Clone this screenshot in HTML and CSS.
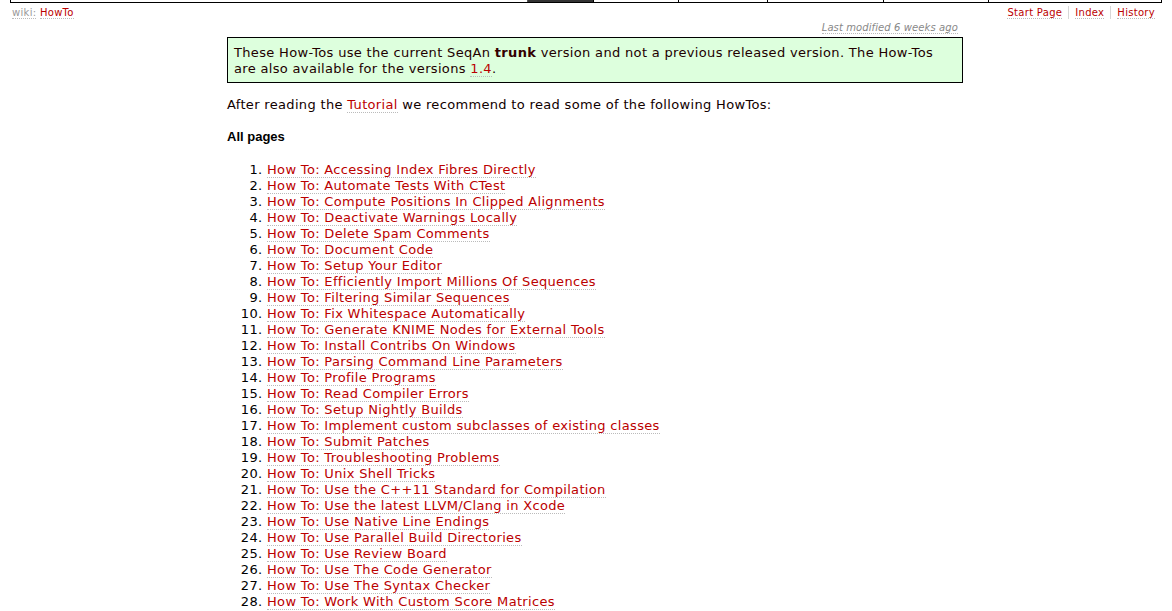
FILE: index.html
```html
<!DOCTYPE html>
<html>
<head>
<meta charset="utf-8">
<title>HowTo</title>
<link rel="stylesheet" href="styles.css">
</head>
<body>
<div class="mainnav">
  <span class="tab tab-first active"></span>
  <span class="tab tab-2"></span>
  <span class="tab tab-3"></span>
  <span class="tab tab-4"></span>
  <span class="tab tab-5"></span>
  <span class="tab tab-6"></span>
</div>
<div class="ctxtnav">
  <div class="path"><a class="first" href="#">wiki:</a> <a href="#">HowTo</a></div>
  <ul class="ctx-links">
    <li><a href="#">Start Page</a></li>
    <li><a href="#">Index</a></li>
    <li><a href="#">History</a></li>
  </ul>
</div>
<div class="content">
  <p class="lastmod"><a href="#">Last modified 6 weeks ago</a></p>
  <div class="notice">These How-Tos use the current SeqAn <b>trunk</b> version and not a previous released version. The How-Tos are also available for the versions <a href="#">1.4</a>.</div>
  <p class="intro">After reading the <a href="#">Tutorial</a> we recommend to read some of the following HowTos:</p>
  <h4 class="heading">All pages</h4>
  <ol class="pages">
    <li><a href="#">How To: Accessing Index Fibres Directly</a></li>
    <li><a href="#">How To: Automate Tests With CTest</a></li>
    <li><a href="#">How To: Compute Positions In Clipped Alignments</a></li>
    <li><a href="#">How To: Deactivate Warnings Locally</a></li>
    <li><a href="#">How To: Delete Spam Comments</a></li>
    <li><a href="#">How To: Document Code</a></li>
    <li><a href="#">How To: Setup Your Editor</a></li>
    <li><a href="#">How To: Efficiently Import Millions Of Sequences</a></li>
    <li><a href="#">How To: Filtering Similar Sequences</a></li>
    <li><a href="#">How To: Fix Whitespace Automatically</a></li>
    <li><a href="#">How To: Generate KNIME Nodes for External Tools</a></li>
    <li><a href="#">How To: Install Contribs On Windows</a></li>
    <li><a href="#">How To: Parsing Command Line Parameters</a></li>
    <li><a href="#">How To: Profile Programs</a></li>
    <li><a href="#">How To: Read Compiler Errors</a></li>
    <li><a href="#">How To: Setup Nightly Builds</a></li>
    <li><a href="#">How To: Implement custom subclasses of existing classes</a></li>
    <li><a href="#">How To: Submit Patches</a></li>
    <li><a href="#">How To: Troubleshooting Problems</a></li>
    <li><a href="#">How To: Unix Shell Tricks</a></li>
    <li><a href="#">How To: Use the C++11 Standard for Compilation</a></li>
    <li><a href="#">How To: Use the latest LLVM/Clang in Xcode</a></li>
    <li><a href="#">How To: Use Native Line Endings</a></li>
    <li><a href="#">How To: Use Parallel Build Directories</a></li>
    <li><a href="#">How To: Use Review Board</a></li>
    <li><a href="#">How To: Use The Code Generator</a></li>
    <li><a href="#">How To: Use The Syntax Checker</a></li>
    <li><a href="#">How To: Work With Custom Score Matrices</a></li>
  </ol>
</div>
</body>
</html>
```
FILE: styles.css
```css
html, body {
  margin: 0;
  padding: 0;
  background: #fff;
}
body {
  font-family: "DejaVu Sans", Verdana, sans-serif;
  font-size: 13px;
  line-height: 16px;
  letter-spacing: 0.33px;
  color: #000;
}
a {
  color: #b00;
  text-decoration: none;
  border-bottom: 1px dotted #bbb;
}

/* main navigation (only its bottom edge is visible) */
.mainnav {
  margin: 0 10px;
  height: 2px;
  border: 1px solid #000;
  border-top: none;
  display: flex;
  justify-content: flex-end;
}
.tab {
  display: block;
  height: 2px;
  border-left: 1px solid #000;
  box-sizing: border-box;
}
.tab-first { width: 66px; border-left-color: #555; }
.tab.active { background: #333; }
.tab-2 { width: 85px; }
.tab-3 { width: 89px; }
.tab-4 { width: 116px; }
.tab-5 { width: 105px; }
.tab-6 { width: 173px; }

/* context navigation */
.ctxtnav {
  display: flex;
  justify-content: space-between;
  align-items: flex-start;
  padding: 3px 17px 0 12px;
  font-size: 10px;
  line-height: 13px;
  letter-spacing: 0.3px;
}
.ctxtnav .first {
  color: #999;
}
.ctx-links {
  display: flex;
  list-style: none;
  margin: 0;
  padding: 0;
}
.ctx-links li {
  padding: 0 6px;
  border-left: 1px solid #d7d7d7;
}
.ctx-links li:first-child {
  border-left: none;
}
.ctx-links li:last-child {
  padding-right: 0;
}

/* content */
.content {
  margin-left: 227px;
  width: 736px;
}
.lastmod {
  margin: 3px 0 0;
  padding-right: 5px;
  text-align: right;
  font-size: 10px;
  line-height: 12px;
  letter-spacing: 0.1px;
  font-style: italic;
}
.lastmod a {
  color: #888;
}
.notice {
  margin-top: 3px;
  background: #dfd;
  border: 1px solid #000;
  padding: 7px 6px 5px;
  color: #200;
}
.notice b {
  color: #300;
}
.intro {
  margin: 14px 0 0;
  color: #100;
}
.heading {
  margin: 16px 0 0;
  font-family: "Liberation Sans", Arial, sans-serif;
  font-size: 13px;
  line-height: 16px;
  font-weight: bold;
  letter-spacing: 0;
}
.pages {
  margin: 17px 0 0;
  padding-left: 40px;
}
```
